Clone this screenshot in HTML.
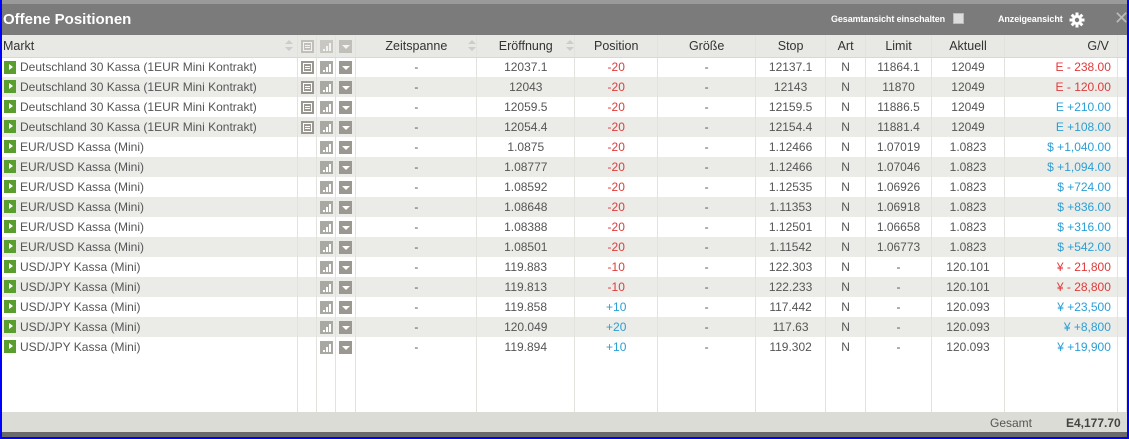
<!DOCTYPE html>
<html><head><meta charset="utf-8"><style>
*{margin:0;padding:0;box-sizing:border-box}
body{width:1129px;height:439px;overflow:hidden;background:#0000ff;font-family:"Liberation Sans",Arial,sans-serif;position:relative}
#w{position:absolute;left:2px;top:0;width:1125px;height:437px;background:#fff;overflow:hidden}
#top{position:absolute;left:0;top:0;width:100%;height:4px;background:#9a9a9a}
#title{position:absolute;left:0;top:4px;width:100%;height:31px;background:#7b7b7b;color:#fff}
#title .t{position:absolute;left:1px;top:7px;font-weight:bold;font-size:15px}
#title .g{position:absolute;left:829px;top:10px;font-size:9px;font-weight:bold;letter-spacing:-0.1px}
#title .cb{position:absolute;left:951px;top:9px;width:11px;height:11px;background:#ddd;border:1px solid #bbb}
#title .a{position:absolute;left:996px;top:10px;font-size:9px;font-weight:bold;letter-spacing:-0.1px}
#title .x{position:absolute;left:1112px;top:4px;font-size:18px;color:#bbb}
table{position:absolute;left:0;top:35px;border-collapse:collapse;table-layout:fixed;font-size:12px;color:#555}
td,th{height:20px;border-right:1px solid #e2e2de;white-space:nowrap;overflow:hidden;text-align:center;padding:0}
th{height:22px;background:#e8e8e4;font-weight:normal;font-size:12.5px;color:#333;border-bottom:1px solid #d8d8d4;position:relative}
tr:nth-child(odd) td{background:#ebebe7}
td.m{text-align:left;padding-left:18px;position:relative}
td.m:before{content:"";position:absolute;left:2px;top:3px;width:12px;height:13px;background:#5a9e2f}
td.m:after{content:"";position:absolute;left:7px;top:6px;border-left:4px solid #fff;border-top:3.5px solid transparent;border-bottom:3.5px solid transparent}
.r{color:#e03a3a}.b{color:#2a9fd6}
td.gv{text-align:right;padding-right:6px}
.i{display:inline-block;width:13px;height:13px;background:#9b9891;vertical-align:middle;position:relative}
.i1:after{content:"";position:absolute;left:2px;top:2px;width:9px;height:9px;border:1px solid #fff;box-sizing:border-box;background:linear-gradient(#fff,#fff) 1px 2px/5px 1px no-repeat,linear-gradient(#fff,#fff) 1px 4px/5px 1px no-repeat}
.i2{background:#aaa8a2}
.i2:after{content:"";position:absolute;left:3px;top:3px;width:8px;height:8px;background:linear-gradient(#fff,#fff) 0 6px/2px 2px no-repeat,linear-gradient(#fff,#fff) 3px 3px/2px 5px no-repeat,linear-gradient(#fff,#fff) 6px 0/2px 8px no-repeat}
.i3:after{content:"";position:absolute;left:3px;top:5px;border-top:4px solid #fff;border-left:4px solid transparent;border-right:4px solid transparent}
th .i{opacity:.5}
.s{position:absolute;right:4px;top:5px;width:8px;height:12px}
.s:before{content:"";position:absolute;top:0;border-bottom:4px solid #ccc;border-left:4px solid transparent;border-right:4px solid transparent}
.s:after{content:"";position:absolute;top:7px;border-top:4px solid #ccc;border-left:4px solid transparent;border-right:4px solid transparent}
#foot{position:absolute;left:0;top:412px;width:100%;height:20px;background:#dcdcd6;font-size:12px;color:#555}
#bar{position:absolute;left:0;top:432px;width:100%;height:5px;background:#6a6a6a}
</style></head><body><div id="w">
<div id="top"></div>
<div id="title"><span class="t">Offene Positionen</span><span class="g">Gesamtansicht einschalten</span><span class="cb"></span><span class="a">Anzeigeansicht</span>
<svg style="position:absolute;left:1067px;top:8px" width="16" height="16" viewBox="0 0 16 16"><g fill="#fff"><circle cx="8" cy="8" r="5"/><rect x="6.5" y="0.5" width="3" height="15"/><rect x="0.5" y="6.5" width="15" height="3"/><rect x="6.5" y="0.5" width="3" height="15" transform="rotate(45 8 8)"/><rect x="6.5" y="0.5" width="3" height="15" transform="rotate(-45 8 8)"/></g><circle cx="8" cy="8" r="2.2" fill="#7b7b7b"/></svg>
<span class="x">✕</span></div>
<table>
<colgroup><col style="width:296px"><col style="width:19px"><col style="width:19px"><col style="width:20px"><col style="width:121px"><col style="width:98px"><col style="width:83px"><col style="width:98px"><col style="width:70px"><col style="width:40px"><col style="width:66px"><col style="width:73px"><col style="width:113px"><col style="width:9px"></colgroup>
<tr><th style="text-align:left;padding-left:1px">Markt<span class="s"></span></th><th><span class="i i1"></span></th><th><span class="i i2"></span></th><th><span class="i i3"></span></th><th>Zeitspanne<span class="s"></span></th><th>Eröffnung<span class="s"></span></th><th>Position</th><th>Größe</th><th>Stop</th><th>Art</th><th>Limit</th><th>Aktuell</th><th style="text-align:right;padding-right:8px">G/V</th><th></th></tr>
<tr><td class="m">Deutschland 30 Kassa (1EUR Mini Kontrakt)</td><td><span class="i i1"></span></td><td><span class="i i2"></span></td><td><span class="i i3"></span></td><td>-</td><td>12037.1</td><td class="r">-20</td><td>-</td><td>12137.1</td><td>N</td><td>11864.1</td><td>12049</td><td class="gv r">E - 238.00</td><td></td></tr>
<tr><td class="m">Deutschland 30 Kassa (1EUR Mini Kontrakt)</td><td><span class="i i1"></span></td><td><span class="i i2"></span></td><td><span class="i i3"></span></td><td>-</td><td>12043</td><td class="r">-20</td><td>-</td><td>12143</td><td>N</td><td>11870</td><td>12049</td><td class="gv r">E - 120.00</td><td></td></tr>
<tr><td class="m">Deutschland 30 Kassa (1EUR Mini Kontrakt)</td><td><span class="i i1"></span></td><td><span class="i i2"></span></td><td><span class="i i3"></span></td><td>-</td><td>12059.5</td><td class="r">-20</td><td>-</td><td>12159.5</td><td>N</td><td>11886.5</td><td>12049</td><td class="gv b">E +210.00</td><td></td></tr>
<tr><td class="m">Deutschland 30 Kassa (1EUR Mini Kontrakt)</td><td><span class="i i1"></span></td><td><span class="i i2"></span></td><td><span class="i i3"></span></td><td>-</td><td>12054.4</td><td class="r">-20</td><td>-</td><td>12154.4</td><td>N</td><td>11881.4</td><td>12049</td><td class="gv b">E +108.00</td><td></td></tr>
<tr><td class="m">EUR/USD Kassa (Mini)</td><td></td><td><span class="i i2"></span></td><td><span class="i i3"></span></td><td>-</td><td>1.0875</td><td class="r">-20</td><td>-</td><td>1.12466</td><td>N</td><td>1.07019</td><td>1.0823</td><td class="gv b">$ +1,040.00</td><td></td></tr>
<tr><td class="m">EUR/USD Kassa (Mini)</td><td></td><td><span class="i i2"></span></td><td><span class="i i3"></span></td><td>-</td><td>1.08777</td><td class="r">-20</td><td>-</td><td>1.12466</td><td>N</td><td>1.07046</td><td>1.0823</td><td class="gv b">$ +1,094.00</td><td></td></tr>
<tr><td class="m">EUR/USD Kassa (Mini)</td><td></td><td><span class="i i2"></span></td><td><span class="i i3"></span></td><td>-</td><td>1.08592</td><td class="r">-20</td><td>-</td><td>1.12535</td><td>N</td><td>1.06926</td><td>1.0823</td><td class="gv b">$ +724.00</td><td></td></tr>
<tr><td class="m">EUR/USD Kassa (Mini)</td><td></td><td><span class="i i2"></span></td><td><span class="i i3"></span></td><td>-</td><td>1.08648</td><td class="r">-20</td><td>-</td><td>1.11353</td><td>N</td><td>1.06918</td><td>1.0823</td><td class="gv b">$ +836.00</td><td></td></tr>
<tr><td class="m">EUR/USD Kassa (Mini)</td><td></td><td><span class="i i2"></span></td><td><span class="i i3"></span></td><td>-</td><td>1.08388</td><td class="r">-20</td><td>-</td><td>1.12501</td><td>N</td><td>1.06658</td><td>1.0823</td><td class="gv b">$ +316.00</td><td></td></tr>
<tr><td class="m">EUR/USD Kassa (Mini)</td><td></td><td><span class="i i2"></span></td><td><span class="i i3"></span></td><td>-</td><td>1.08501</td><td class="r">-20</td><td>-</td><td>1.11542</td><td>N</td><td>1.06773</td><td>1.0823</td><td class="gv b">$ +542.00</td><td></td></tr>
<tr><td class="m">USD/JPY Kassa (Mini)</td><td></td><td><span class="i i2"></span></td><td><span class="i i3"></span></td><td>-</td><td>119.883</td><td class="r">-10</td><td>-</td><td>122.303</td><td>N</td><td>-</td><td>120.101</td><td class="gv r">¥ - 21,800</td><td></td></tr>
<tr><td class="m">USD/JPY Kassa (Mini)</td><td></td><td><span class="i i2"></span></td><td><span class="i i3"></span></td><td>-</td><td>119.813</td><td class="r">-10</td><td>-</td><td>122.233</td><td>N</td><td>-</td><td>120.101</td><td class="gv r">¥ - 28,800</td><td></td></tr>
<tr><td class="m">USD/JPY Kassa (Mini)</td><td></td><td><span class="i i2"></span></td><td><span class="i i3"></span></td><td>-</td><td>119.858</td><td class="b">+10</td><td>-</td><td>117.442</td><td>N</td><td>-</td><td>120.093</td><td class="gv b">¥ +23,500</td><td></td></tr>
<tr><td class="m">USD/JPY Kassa (Mini)</td><td></td><td><span class="i i2"></span></td><td><span class="i i3"></span></td><td>-</td><td>120.049</td><td class="b">+20</td><td>-</td><td>117.63</td><td>N</td><td>-</td><td>120.093</td><td class="gv b">¥ +8,800</td><td></td></tr>
<tr><td class="m">USD/JPY Kassa (Mini)</td><td></td><td><span class="i i2"></span></td><td><span class="i i3"></span></td><td>-</td><td>119.894</td><td class="b">+10</td><td>-</td><td>119.302</td><td>N</td><td>-</td><td>120.093</td><td class="gv b">¥ +19,900</td><td></td></tr>
<tr><td style="height:55px;background:#fff"></td><td style="background:#fff"></td><td style="background:#fff"></td><td style="background:#fff"></td><td style="background:#fff"></td><td style="background:#fff"></td><td style="background:#fff"></td><td style="background:#fff"></td><td style="background:#fff"></td><td style="background:#fff"></td><td style="background:#fff"></td><td style="background:#fff"></td><td style="background:#fff"></td><td style="background:#fff"></td></tr>
</table>
<div id="foot"><span style="position:absolute;left:988px;top:4px">Gesamt</span><span style="position:absolute;left:1064px;top:4px;font-weight:bold;color:#444">E4,177.70</span></div>
<div id="bar"></div>
</div></body></html>
